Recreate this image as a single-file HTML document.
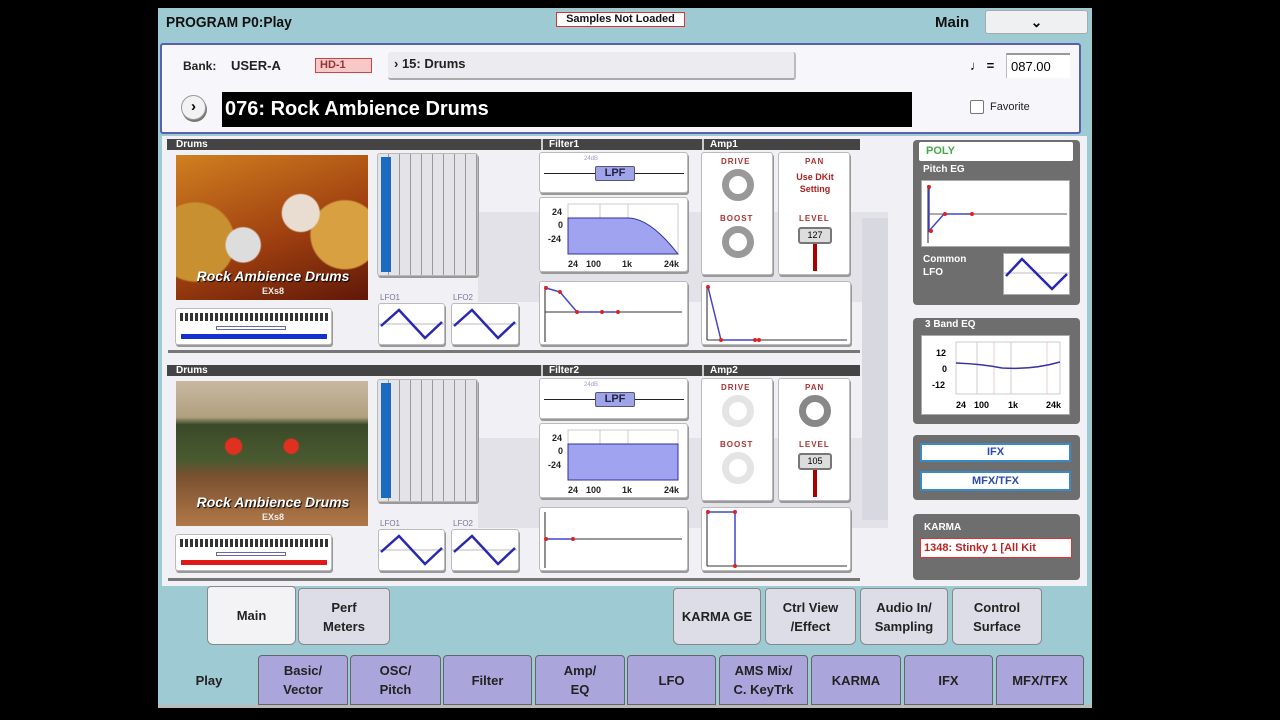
<!DOCTYPE html>
<html><head><meta charset="utf-8"><style>
*{margin:0;padding:0;box-sizing:border-box}
body{width:1280px;height:720px;background:#000;position:relative;overflow:hidden;font-family:"Liberation Sans",sans-serif;font-weight:bold}
.a{position:absolute}
.box{position:absolute;background:#fff;border:1px solid #bbb;border-radius:3px;box-shadow:1px 2px 0 #999}
.hdr{position:absolute;background:#444;color:#fff;font-size:10px;line-height:11px;height:11px}
.lbl{position:absolute;font-size:8px;color:#a33;letter-spacing:1px}
.tab{position:absolute;display:flex;align-items:center;justify-content:center;text-align:center;font-size:13px;color:#222;line-height:19px;border-radius:0 0 6px 6px}
.ut{background:#dcdde6;border:1px solid #888;top:588px;height:57px;border-radius:4px 4px 6px 6px}
.bt{background:#aaa6dc;border:1px solid #666;top:655px;height:50px;border-radius:4px 4px 0 0}
</style></head><body>
<div class="a" style="left:158px;top:8px;width:934px;height:700px;background:#9ecbd3"></div>
<div class="a" style="left:166px;top:14px;font-size:15px;color:#111;transform:scaleX(.92);transform-origin:left">PROGRAM P0:Play</div>
<div class="a" style="left:556px;top:12px;width:129px;height:15px;border:1px solid #d33;background:#fff;font-size:11px;text-align:center;line-height:13px;color:#111">Samples Not Loaded</div>
<div class="a" style="left:935px;top:14px;font-size:15px;color:#111">Main</div>
<div class="a" style="left:985px;top:10px;width:103px;height:24px;background:#eef0f2;border:1px solid #aaa;border-radius:3px;text-align:center;font-size:14px;line-height:22px">&#8964;</div>
<div class="a" style="left:160px;top:43px;width:921px;height:91px;background:#f6f6fb;border:2px solid #5a5fb0;border-radius:3px"></div>
<div class="a" style="left:183px;top:59px;font-size:12px;color:#222">Bank:</div>
<div class="a" style="left:231px;top:58px;font-size:13px;color:#222">USER-A</div>
<div class="a" style="left:315px;top:58px;width:57px;height:15px;background:#f6c8c8;border:1px solid #c44;font-size:11px;line-height:13px;padding-left:4px;color:#933">HD-1</div>
<div class="a" style="left:388px;top:52px;width:408px;height:28px;background:#ececf0;border-bottom:2px solid #aaa;border-right:2px solid #bbb;border-radius:3px;font-size:13px;padding:4px 6px;color:#222">&#8250; 15: Drums</div>
<div class="a" style="left:970px;top:58px;font-size:13px">&#9833; =</div>
<div class="a" style="left:1006px;top:53px;width:64px;height:25px;background:#fff;border-top:2px solid #999;border-left:1px solid #bbb;font-size:13px;line-height:23px;padding-left:4px;font-weight:normal">087.00</div>
<div class="a" style="left:181px;top:95px;width:25px;height:25px;border-radius:50%;background:#f2f2f2;border:1px solid #999;box-shadow:1px 2px 0 #777;text-align:center;font-size:15px;line-height:22px">&#8250;</div>
<div class="a" style="left:222px;top:92px;width:690px;height:35px;background:#000;color:#fff;font-size:20px;line-height:35px;padding-left:3px">076: Rock Ambience Drums</div>
<div class="a" style="left:970px;top:100px;width:14px;height:14px;border:1px solid #777;border-radius:2px;background:#fff"></div>
<div class="a" style="left:990px;top:101px;font-size:11px;color:#222;font-weight:normal">Favorite</div>
<div class="a" style="left:162px;top:136px;width:925px;height:450px;background:#f0f0f5"></div>
<div class="a" style="left:478px;top:212px;width:410px;height:90px;background:#e2e2e8"></div>
<div class="a" style="left:478px;top:438px;width:410px;height:90px;background:#e2e2e8"></div>
<div class="a" style="left:862px;top:218px;width:26px;height:302px;background:#d8d8e0"></div>

<div class="a" style="left:160px;top:139px;width:720px;height:220px">
 <div class="hdr" style="left:7px;top:0;width:693px"><span style="position:absolute;left:9px">Drums</span><span style="position:absolute;left:374px;border-left:2px solid #ccc;padding-left:6px">Filter1</span><span style="position:absolute;left:535px;border-left:2px solid #ccc;padding-left:6px">Amp1</span></div>
 <div class="a" style="left:16px;top:16px;width:192px;height:145px;background:radial-gradient(circle at 65% 40%,#e8ddd0 0 12%,transparent 13%),radial-gradient(circle at 35% 62%,#ddd 0 11%,transparent 12%),radial-gradient(circle at 88% 55%,#d8a040 0 18%,transparent 19%),radial-gradient(circle at 10% 60%,#c89030 0 20%,transparent 21%),linear-gradient(160deg,#d08020,#a04010 55%,#601808)">
  <div class="a" style="left:4px;top:113px;width:186px;text-align:center;color:#fff;font-size:14px;font-style:italic;text-shadow:1px 1px 1px #000">Rock Ambience Drums</div>
  <div class="a" style="left:86px;top:131px;color:#eee;font-size:9px">EXs8</div></div>
 <div class="box" style="left:15px;top:169px;width:157px;height:37px"><div class="a" style="left:4px;top:4px;width:148px;height:8px;background:repeating-linear-gradient(90deg,#333 0 3px,#fff 3px 5px)"></div><div class="a" style="left:40px;top:17px;width:70px;height:4px;border:1px solid #66a;font-size:8px"></div><div class="a" style="left:5px;top:25px;width:146px;height:5px;background:#1430d0"></div></div>
 <div class="box" style="left:217px;top:14px;width:101px;height:123px;background:repeating-linear-gradient(90deg,#e4e4e8 0 10px,#999 10px 11px)"><div class="a" style="left:3px;top:3px;width:10px;height:115px;background:#1a6ac0"></div></div>
 <div class="a" style="left:220px;top:154px;font-size:8px;color:#779;font-weight:normal">LFO1</div>
 <div class="a" style="left:293px;top:154px;font-size:8px;color:#779;font-weight:normal">LFO2</div>
 <div class="box" style="left:218px;top:164px;width:67px;height:42px"><svg width="65" height="40" class="a"><line x1="0" y1="20" x2="65" y2="20" stroke="#bbb"/><polyline points="2,22 20,6 46,34 63,18" fill="none" stroke="#2828b0" stroke-width="2.5"/></svg></div>
 <div class="box" style="left:291px;top:164px;width:68px;height:42px"><svg width="65" height="40" class="a"><line x1="0" y1="20" x2="65" y2="20" stroke="#bbb"/><polyline points="2,22 20,6 46,34 63,18" fill="none" stroke="#2828b0" stroke-width="2.5"/></svg></div>
 <div class="box" style="left:379px;top:13px;width:149px;height:41px"><div class="a" style="left:4px;top:20px;width:140px;height:1px;background:#222"></div><div class="a" style="left:44px;top:3px;font-size:6px;color:#99c;font-weight:normal">24dB</div><div class="a" style="left:55px;top:13px;width:40px;height:15px;background:#9fa4e8;border:1px solid #557;border-radius:2px;font-size:11px;color:#224;text-align:center;line-height:13px">LPF</div></div>
 <div class="box" style="left:379px;top:58px;width:149px;height:75px"><svg class="a" width="147" height="73"><rect x="28" y="6" width="110" height="50" fill="none" stroke="#ccc"/><line x1="60" y1="6" x2="60" y2="56" stroke="#ccc"/><line x1="88" y1="6" x2="88" y2="56" stroke="#ccc"/><path d="M28 20 H88 Q110 20 138 56 H28Z" fill="#a0a4f0" stroke="#3030a0"/><text x="12" y="17" font-size="9" fill="#222">24</text><text x="18" y="30" font-size="9" fill="#222">0</text><text x="8" y="44" font-size="9" fill="#222">-24</text><text x="28" y="69" font-size="9" fill="#222">24</text><text x="46" y="69" font-size="9" fill="#222">100</text><text x="82" y="69" font-size="9" fill="#222">1k</text><text x="124" y="69" font-size="9" fill="#222">24k</text></svg></div>
 <div class="box" style="left:379px;top:142px;width:149px;height:64px"><svg class="a" width="147" height="62"><line x1="5" y1="4" x2="5" y2="60" stroke="#222"/><line x1="5" y1="30" x2="142" y2="30" stroke="#333"/><polyline points="6,6 20,10 37,30 62,30 78,30" fill="none" stroke="#44c" stroke-width="1.5"/><g fill="#d22"><circle cx="6" cy="6" r="2"/><circle cx="20" cy="10" r="2"/><circle cx="37" cy="30" r="2"/><circle cx="62" cy="30" r="2"/><circle cx="78" cy="30" r="2"/></g></svg></div>
 <div class="box" style="left:541px;top:13px;width:72px;height:123px"><div class="lbl" style="left:19px;top:4px">DRIVE</div><div class="a" style="left:20px;top:16px;width:32px;height:32px;border-radius:50%;border:7px solid #999;background:#fff"></div><div class="lbl" style="left:18px;top:61px">BOOST</div><div class="a" style="left:20px;top:73px;width:32px;height:32px;border-radius:50%;border:7px solid #999;background:#fff"></div></div>
 <div class="box" style="left:618px;top:13px;width:72px;height:123px"><div class="lbl" style="left:26px;top:4px">PAN</div><div class="a" style="left:10px;top:18px;width:52px;text-align:center;font-size:9px;color:#a22;line-height:12px">Use DKit Setting</div><div class="lbl" style="left:20px;top:61px">LEVEL</div><div class="a" style="left:34px;top:82px;width:4px;height:36px;background:#a00"></div><div class="a" style="left:19px;top:74px;width:34px;height:17px;background:#ddd;border:2px solid #777;border-radius:3px;font-size:9px;text-align:center;line-height:13px;font-weight:normal">127</div></div>
 <div class="box" style="left:541px;top:142px;width:150px;height:64px"><svg class="a" width="148" height="62"><line x1="5" y1="4" x2="5" y2="58" stroke="#222"/><line x1="5" y1="58" x2="145" y2="58" stroke="#333"/><polyline points="6,5 19,58 56,58" fill="none" stroke="#44c" stroke-width="1.5"/><g fill="#d22"><circle cx="6" cy="5" r="2"/><circle cx="19" cy="58" r="2"/><circle cx="53" cy="58" r="2"/><circle cx="57" cy="58" r="2"/></g></svg></div>
 <div class="a" style="left:8px;top:211px;width:692px;height:3px;background:#777"></div>
</div>

<div class="a" style="left:160px;top:365px;width:720px;height:220px">
 <div class="hdr" style="left:7px;top:0;width:693px"><span style="position:absolute;left:9px">Drums</span><span style="position:absolute;left:374px;border-left:2px solid #ccc;padding-left:6px">Filter2</span><span style="position:absolute;left:535px;border-left:2px solid #ccc;padding-left:6px">Amp2</span></div>
 <div class="a" style="left:16px;top:16px;width:192px;height:145px;background:radial-gradient(circle at 30% 45%,#e03020 0 5%,transparent 6%),radial-gradient(circle at 60% 45%,#e03020 0 5%,transparent 6%),linear-gradient(180deg,#c8b8a0 0,#b0a080 25%,#3a4a28 30%,#4a5a30 55%,#7a5030 65%,#b07848 100%)">
  <div class="a" style="left:4px;top:113px;width:186px;text-align:center;color:#fff;font-size:14px;font-style:italic;text-shadow:1px 1px 1px #000">Rock Ambience Drums</div>
  <div class="a" style="left:86px;top:131px;color:#eee;font-size:9px">EXs8</div></div>
 <div class="box" style="left:15px;top:169px;width:157px;height:37px"><div class="a" style="left:4px;top:4px;width:148px;height:8px;background:repeating-linear-gradient(90deg,#333 0 3px,#fff 3px 5px)"></div><div class="a" style="left:40px;top:17px;width:70px;height:4px;border:1px solid #66a"></div><div class="a" style="left:5px;top:25px;width:146px;height:5px;background:#e01818"></div></div>
 <div class="box" style="left:217px;top:14px;width:101px;height:123px;background:repeating-linear-gradient(90deg,#e4e4e8 0 10px,#999 10px 11px)"><div class="a" style="left:3px;top:3px;width:10px;height:115px;background:#1a6ac0"></div></div>
 <div class="a" style="left:220px;top:154px;font-size:8px;color:#779;font-weight:normal">LFO1</div>
 <div class="a" style="left:293px;top:154px;font-size:8px;color:#779;font-weight:normal">LFO2</div>
 <div class="box" style="left:218px;top:164px;width:67px;height:42px"><svg width="65" height="40" class="a"><line x1="0" y1="20" x2="65" y2="20" stroke="#bbb"/><polyline points="2,22 20,6 46,34 63,18" fill="none" stroke="#2828b0" stroke-width="2.5"/></svg></div>
 <div class="box" style="left:291px;top:164px;width:68px;height:42px"><svg width="65" height="40" class="a"><line x1="0" y1="20" x2="65" y2="20" stroke="#bbb"/><polyline points="2,22 20,6 46,34 63,18" fill="none" stroke="#2828b0" stroke-width="2.5"/></svg></div>
 <div class="box" style="left:379px;top:13px;width:149px;height:41px"><div class="a" style="left:4px;top:20px;width:140px;height:1px;background:#222"></div><div class="a" style="left:44px;top:3px;font-size:6px;color:#99c;font-weight:normal">24dB</div><div class="a" style="left:55px;top:13px;width:40px;height:15px;background:#9fa4e8;border:1px solid #557;border-radius:2px;font-size:11px;color:#224;text-align:center;line-height:13px">LPF</div></div>
 <div class="box" style="left:379px;top:58px;width:149px;height:75px"><svg class="a" width="147" height="73"><rect x="28" y="6" width="110" height="50" fill="none" stroke="#ccc"/><line x1="60" y1="6" x2="60" y2="56" stroke="#ccc"/><line x1="88" y1="6" x2="88" y2="56" stroke="#ccc"/><path d="M28 20 H138 V56 H28Z" fill="#a0a4f0" stroke="#3030a0"/><text x="12" y="17" font-size="9" fill="#222">24</text><text x="18" y="30" font-size="9" fill="#222">0</text><text x="8" y="44" font-size="9" fill="#222">-24</text><text x="28" y="69" font-size="9" fill="#222">24</text><text x="46" y="69" font-size="9" fill="#222">100</text><text x="82" y="69" font-size="9" fill="#222">1k</text><text x="124" y="69" font-size="9" fill="#222">24k</text></svg></div>
 <div class="box" style="left:379px;top:142px;width:149px;height:64px"><svg class="a" width="147" height="62"><line x1="5" y1="4" x2="5" y2="60" stroke="#222"/><line x1="5" y1="31" x2="142" y2="31" stroke="#333"/><line x1="5" y1="31" x2="33" y2="31" stroke="#44c" stroke-width="1.5"/><g fill="#d22"><circle cx="6" cy="31" r="2"/><circle cx="33" cy="31" r="2"/></g></svg></div>
 <div class="box" style="left:541px;top:13px;width:72px;height:123px"><div class="lbl" style="left:19px;top:4px">DRIVE</div><div class="a" style="left:20px;top:16px;width:32px;height:32px;border-radius:50%;border:7px solid #e4e4e4;background:#fff"></div><div class="lbl" style="left:18px;top:61px">BOOST</div><div class="a" style="left:20px;top:73px;width:32px;height:32px;border-radius:50%;border:7px solid #e4e4e4;background:#fff"></div></div>
 <div class="box" style="left:618px;top:13px;width:72px;height:123px"><div class="lbl" style="left:26px;top:4px">PAN</div><div class="a" style="left:20px;top:16px;width:32px;height:32px;border-radius:50%;border:7px solid #888;background:#fff"></div><div class="lbl" style="left:20px;top:61px">LEVEL</div><div class="a" style="left:34px;top:82px;width:4px;height:36px;background:#a00"></div><div class="a" style="left:19px;top:74px;width:34px;height:17px;background:#ddd;border:2px solid #777;border-radius:3px;font-size:9px;text-align:center;line-height:13px;font-weight:normal">105</div></div>
 <div class="box" style="left:541px;top:142px;width:150px;height:64px"><svg class="a" width="148" height="62"><line x1="5" y1="4" x2="5" y2="58" stroke="#222"/><line x1="5" y1="58" x2="145" y2="58" stroke="#333"/><polyline points="6,4 33,4 33,58" fill="none" stroke="#44c" stroke-width="1.5"/><g fill="#d22"><circle cx="6" cy="4" r="2"/><circle cx="33" cy="4" r="2"/><circle cx="33" cy="58" r="2"/></g></svg></div>
</div>
<div class="a" style="left:168px;top:578px;width:692px;height:3px;background:#777"></div>

<div class="a" style="left:913px;top:140px;width:167px;height:165px;background:#6e6e6e;border-radius:4px"></div>
<div class="a" style="left:919px;top:142px;width:154px;height:19px;background:#fff;border-radius:2px;color:#4a4;font-size:11px;padding:3px 7px">POLY</div>
<div class="a" style="left:923px;top:164px;color:#fff;font-size:10px">Pitch EG</div>
<div class="a" style="left:921px;top:180px;width:149px;height:67px;background:#fff;border:1px solid #aaa"><svg class="a" width="147" height="65"><line x1="6" y1="4" x2="6" y2="62" stroke="#222"/><line x1="6" y1="33" x2="145" y2="33" stroke="#555"/><polyline points="7,6 7,50 22,33 50,33" fill="none" stroke="#44c" stroke-width="1.5"/><g fill="#d22"><circle cx="7" cy="6" r="2"/><circle cx="9" cy="50" r="2"/><circle cx="23" cy="33" r="2"/><circle cx="50" cy="33" r="2"/></g></svg></div>
<div class="a" style="left:923px;top:253px;color:#fff;font-size:10px;line-height:13px">Common<br>LFO</div>
<div class="a" style="left:1003px;top:253px;width:67px;height:42px;background:#fff;border:1px solid #aaa"><svg class="a" width="65" height="40"><line x1="0" y1="19" x2="65" y2="19" stroke="#bbb"/><polyline points="2,22 18,5 48,35 63,20" fill="none" stroke="#2828b0" stroke-width="2.5"/></svg></div>
<div class="a" style="left:913px;top:318px;width:167px;height:106px;background:#6e6e6e;border-radius:4px"></div>
<div class="a" style="left:925px;top:319px;color:#fff;font-size:10px">3 Band EQ</div>
<div class="a" style="left:921px;top:335px;width:149px;height:80px;background:#fff;border:1px solid #aaa"><svg class="a" width="147" height="78"><rect x="34" y="6" width="104" height="52" fill="none" stroke="#ccc"/><line x1="55" y1="6" x2="55" y2="58" stroke="#ccc"/><line x1="89" y1="6" x2="89" y2="58" stroke="#ccc"/><line x1="72" y1="6" x2="72" y2="58" stroke="#ecc"/><line x1="125" y1="6" x2="125" y2="58" stroke="#ecc"/><path d="M34 27 Q60 28 80 32 Q110 34 138 26" fill="none" stroke="#33a" stroke-width="1.5"/><text x="14" y="20" font-size="9">12</text><text x="20" y="36" font-size="9">0</text><text x="10" y="52" font-size="9">-12</text><text x="34" y="72" font-size="9">24</text><text x="52" y="72" font-size="9">100</text><text x="86" y="72" font-size="9">1k</text><text x="124" y="72" font-size="9">24k</text></svg></div>
<div class="a" style="left:913px;top:435px;width:167px;height:65px;background:#6e6e6e;border-radius:4px"></div>
<div class="a" style="left:920px;top:443px;width:151px;height:19px;background:#fff;border:2px solid #3a8ac8;color:#2a4ab0;font-size:11px;text-align:center;line-height:15px">IFX</div>
<div class="a" style="left:920px;top:471px;width:151px;height:20px;background:#fff;border:2px solid #3a8ac8;color:#2a4ab0;font-size:11px;text-align:center;line-height:16px">MFX/TFX</div>
<div class="a" style="left:913px;top:514px;width:167px;height:66px;background:#6e6e6e;border-radius:4px"></div>
<div class="a" style="left:924px;top:522px;color:#fff;font-size:10px">KARMA</div>
<div class="a" style="left:920px;top:538px;width:152px;height:20px;background:#fff;border:1px solid #d33;color:#b22;font-size:11px;line-height:18px;padding-left:3px;white-space:nowrap;overflow:hidden">1348: Stinky 1 [All Kit</div>

<div class="tab ut" style="left:207px;width:89px;background:#f3f3f6;top:586px;height:59px">Main</div>
<div class="tab ut" style="left:298px;width:92px">Perf<br>Meters</div>
<div class="tab ut" style="left:673px;width:88px">KARMA GE</div>
<div class="tab ut" style="left:765px;width:91px">Ctrl View<br>/Effect</div>
<div class="tab ut" style="left:860px;width:88px">Audio In/<br>Sampling</div>
<div class="tab ut" style="left:952px;width:90px">Control<br>Surface</div>
<div class="tab" style="left:163px;top:655px;height:50px;width:92px;background:#9ecbd3">Play</div>
<div class="tab bt" style="left:258px;width:90px">Basic/<br>Vector</div>
<div class="tab bt" style="left:350px;width:91px">OSC/<br>Pitch</div>
<div class="tab bt" style="left:443px;width:89px">Filter</div>
<div class="tab bt" style="left:535px;width:90px">Amp/<br>EQ</div>
<div class="tab bt" style="left:627px;width:89px">LFO</div>
<div class="tab bt" style="left:719px;width:89px">AMS Mix/<br>C. KeyTrk</div>
<div class="tab bt" style="left:811px;width:90px">KARMA</div>
<div class="tab bt" style="left:904px;width:89px">IFX</div>
<div class="tab bt" style="left:996px;width:88px">MFX/TFX</div>
<div class="a" style="left:158px;top:705px;width:934px;height:3px;background:#bbb"></div>
</body></html>
